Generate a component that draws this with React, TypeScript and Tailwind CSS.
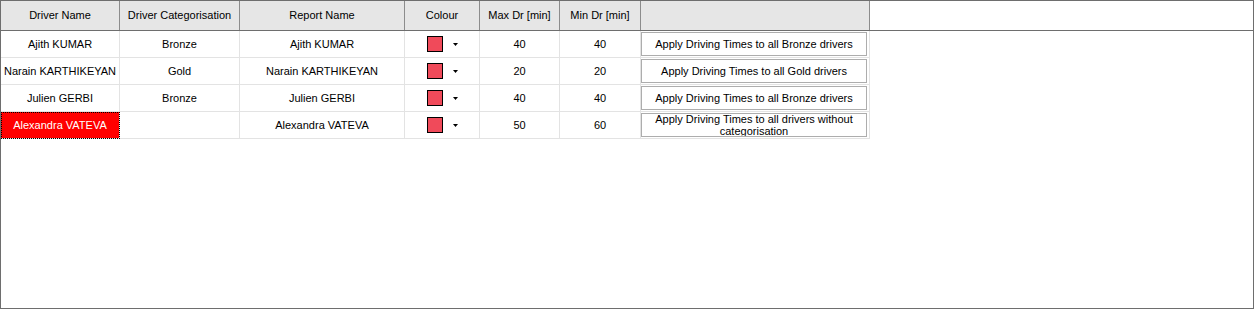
import React from 'react'

type Row = {
  name: string
  category: string
  report: string
  max: number
  min: number
  action: string
  selected?: boolean
}

const rows: Row[] = [
  { name: 'Ajith KUMAR', category: 'Bronze', report: 'Ajith KUMAR', max: 40, min: 40, action: 'Apply Driving Times to all Bronze drivers' },
  { name: 'Narain KARTHIKEYAN', category: 'Gold', report: 'Narain KARTHIKEYAN', max: 20, min: 20, action: 'Apply Driving Times to all Gold drivers' },
  { name: 'Julien GERBI', category: 'Bronze', report: 'Julien GERBI', max: 40, min: 40, action: 'Apply Driving Times to all Bronze drivers' },
  { name: 'Alexandra VATEVA', category: '', report: 'Alexandra VATEVA', max: 50, min: 60, action: 'Apply Driving Times to all drivers without categorisation', selected: true },
]

const headers = ['Driver Name', 'Driver Categorisation', 'Report Name', 'Colour', 'Max Dr [min]', 'Min Dr [min]', '']
const widths = ['w-[119px]', 'w-[120px]', 'w-[165px]', 'w-[75px]', 'w-[80px]', 'w-[81px]', 'w-[229px]']

const ColourCell = () => (
  <div className="flex items-center justify-center gap-[10px]">
    <div className="w-[16px] h-[16px] bg-[#f04a5a] border border-black" />
    <svg width="5" height="3" viewBox="0 0 5 3">
      <path d="M0 0 H5 L2.5 3 Z" fill="#000" />
    </svg>
  </div>
)

export default function App() {
  return (
    <div
      className="w-[1254px] h-[309px] border border-[#6e6e6e] bg-white text-[11px] text-black overflow-hidden"
      style={{ fontFamily: '"Liberation Sans", Arial, sans-serif' }}
    >
      <div className="flex h-[30px] bg-[#e6e6e6] border-b border-[#6e6e6e]">
        {headers.map((h, i) => (
          <div key={i} className={`${widths[i]} shrink-0 flex items-center justify-center border-r border-[#8c8c8c]`}>
            {h}
          </div>
        ))}
        <div className="flex-1 bg-white" />
      </div>
      {rows.map((r, i) => (
        <div key={i} className="flex h-[27px]">
          <div
            className={`${widths[0]} shrink-0 flex items-center justify-center border-b border-r border-[#e3e3e3] whitespace-nowrap ${
              r.selected ? 'bg-[#ff0000] text-white outline-1 outline-dotted outline-black -outline-offset-1' : ''
            }`}
          >
            {r.name}
          </div>
          <div className={`${widths[1]} shrink-0 flex items-center justify-center border-b border-r border-[#e3e3e3]`}>{r.category}</div>
          <div className={`${widths[2]} shrink-0 flex items-center justify-center border-b border-r border-[#e3e3e3]`}>{r.report}</div>
          <div className={`${widths[3]} shrink-0 flex items-center justify-center border-b border-r border-[#e3e3e3]`}>
            <ColourCell />
          </div>
          <div className={`${widths[4]} shrink-0 flex items-center justify-center border-b border-r border-[#e3e3e3]`}>{r.max}</div>
          <div className={`${widths[5]} shrink-0 flex items-center justify-center border-b border-r border-[#e3e3e3]`}>{r.min}</div>
          <div className={`${widths[6]} shrink-0 flex border-b border-r border-[#e3e3e3] pt-[1px] pb-[1px] pr-[2px]`}>
            <button className="flex-1 bg-white border border-[#adadad] flex items-center justify-center text-center leading-[12px] overflow-hidden px-[4px]">
              {r.action}
            </button>
          </div>
        </div>
      ))}
    </div>
  )
}
